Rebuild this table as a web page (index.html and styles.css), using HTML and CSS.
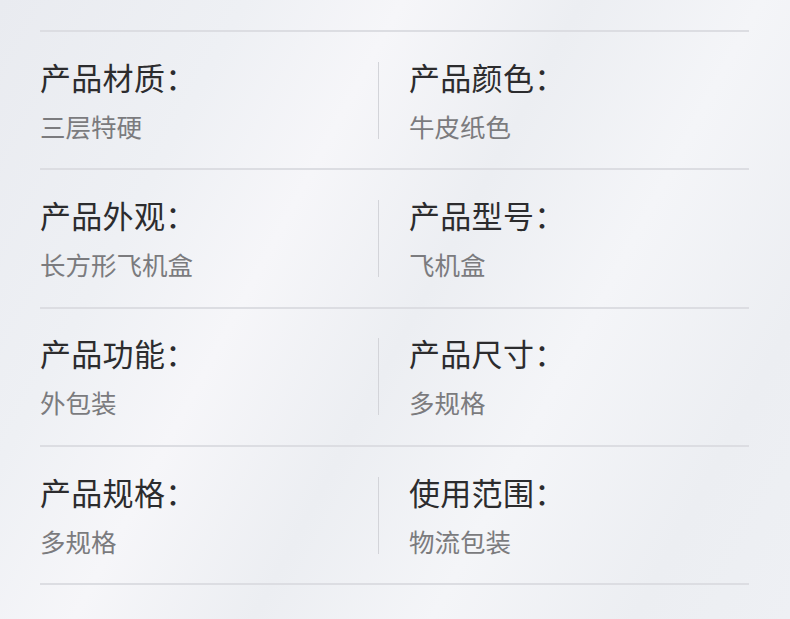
FILE: index.html
```html
<!DOCTYPE html>
<html lang="zh-CN">
<head>
<meta charset="utf-8">
<title>产品参数</title>
<link rel="stylesheet" href="styles.css">
</head>
<body>
<div class="page">
  <div class="specs">
    <div class="row">
      <div class="cell cell-left"><div class="label">产品材质：</div><div class="value">三层特硬</div></div>
      <div class="cell cell-right"><div class="label">产品颜色：</div><div class="value">牛皮纸色</div></div>
    </div>
    <div class="row">
      <div class="cell cell-left"><div class="label">产品外观：</div><div class="value">长方形飞机盒</div></div>
      <div class="cell cell-right"><div class="label">产品型号：</div><div class="value">飞机盒</div></div>
    </div>
    <div class="row">
      <div class="cell cell-left"><div class="label">产品功能：</div><div class="value">外包装</div></div>
      <div class="cell cell-right"><div class="label">产品尺寸：</div><div class="value">多规格</div></div>
    </div>
    <div class="row">
      <div class="cell cell-left"><div class="label">产品规格：</div><div class="value">多规格</div></div>
      <div class="cell cell-right"><div class="label">使用范围：</div><div class="value">物流包装</div></div>
    </div>
  </div>
</div>
</body>
</html>
```

FILE: styles.css
```css
html, body {
  margin: 0;
  padding: 0;
}
body {
  width: 790px;
  height: 619px;
  overflow: hidden;
  font-family: "Noto Sans CJK SC", "Noto Sans", sans-serif;
  background: linear-gradient(118deg, #e9ebf0 0%, #eef0f4 22%, #f6f6f9 36%, #eceef2 52%, #f4f5f8 68%, #eceef2 86%, #eef0f4 100%);
}
.page {
  padding: 30px 41px 0 40px;
}
.specs {
  border-top: 2px solid #dcdde2;
}
.row {
  display: flex;
  height: 136.3px;
  align-items: center;
  border-bottom: 2px solid #dcdde2;
}
.cell {
  display: flex;
  flex-direction: column;
  height: 77px;
  justify-content: space-between;
}
.cell-left {
  width: 338px;
}
.cell-right {
  border-left: 1px solid #d3d4d9;
  padding-left: 30px;
}
.label {
  font-size: 31px;
  line-height: 32px;
  color: #2c2c2e;
  margin-top: -1px;
  letter-spacing: 0.3px;
}
.value {
  font-size: 25.5px;
  line-height: 28px;
  color: #7b7b7e;
  margin-bottom: -1px;
}
```
